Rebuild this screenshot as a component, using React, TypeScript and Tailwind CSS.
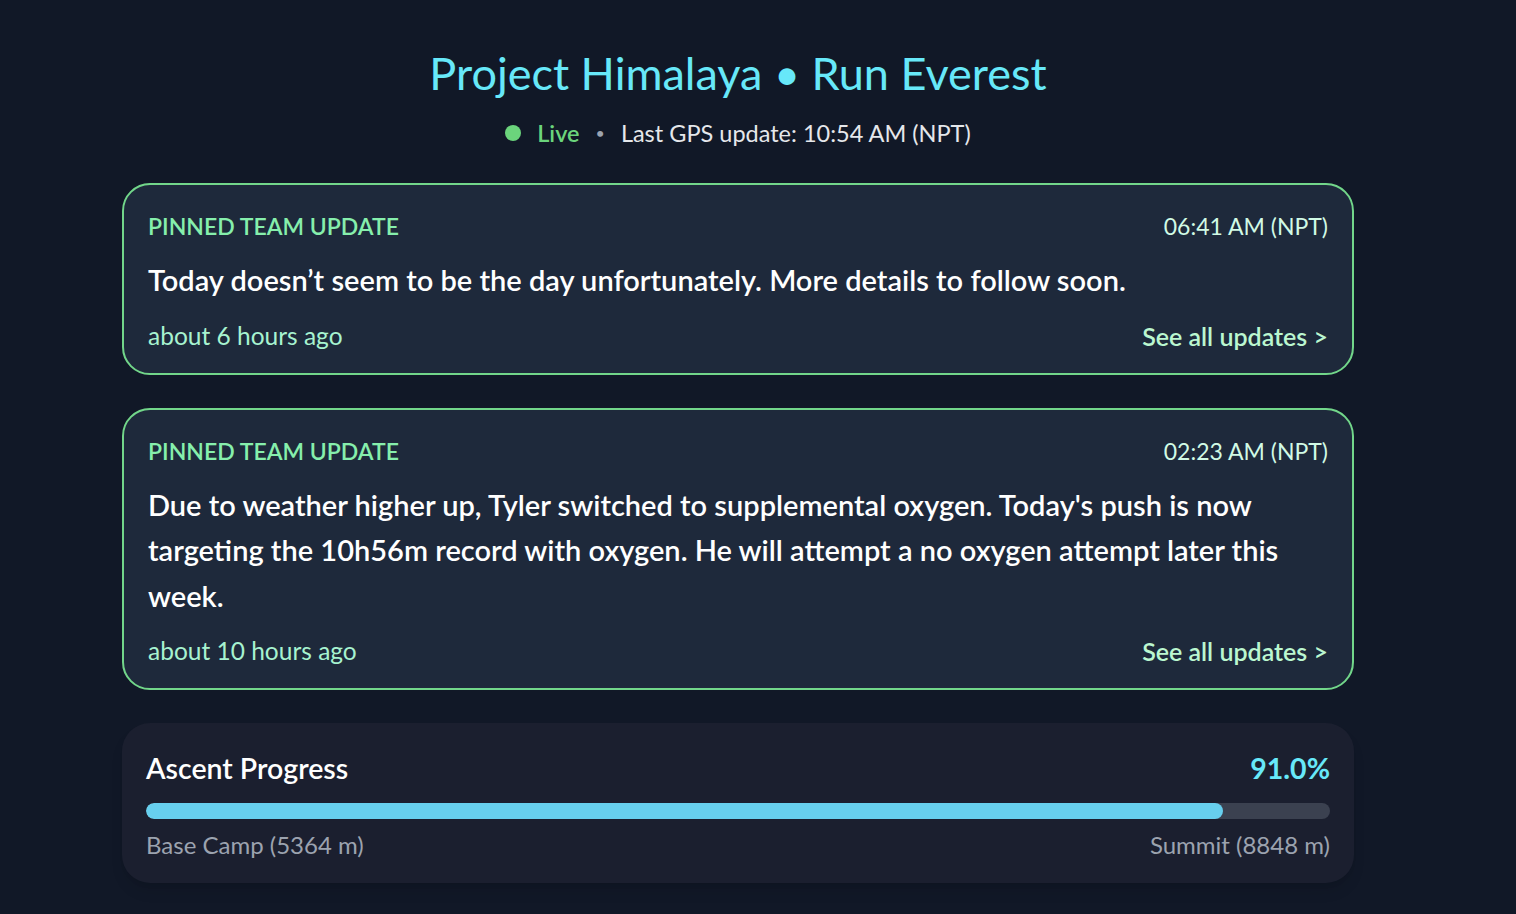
const updates = [
  {
    time: "06:41 AM (NPT)",
    text: "Today doesn’t seem to be the day unfortunately. More details to follow soon.",
    ago: "about 6 hours ago",
  },
  {
    time: "02:23 AM (NPT)",
    text: "Due to weather higher up, Tyler switched to supplemental oxygen. Today's push is now targeting the 10h56m record with oxygen. He will attempt a no oxygen attempt later this week.",
    ago: "about 10 hours ago",
  },
];

const UpdateCard = ({ time, text, ago }: { time: string; text: string; ago: string }) => {
  return (
    <div className="rounded-[28px] border-2 border-[#72d68a] bg-[#1e293b] px-6 pt-[23px] pb-[19px]">
      <div className="flex items-center justify-between leading-[36px]">
        <span className="text-[23px] font-semibold text-[#86efac]">PINNED TEAM UPDATE</span>
        <span className="text-[23px] text-[#d1fae5]">{time}</span>
      </div>
      <p className="mt-[13px] pr-[40px] text-[29px] font-semibold leading-[45.5px] text-white">{text}</p>
      <div className="mt-[15px] flex items-center justify-between leading-[36px]">
        <span className="text-[24.5px] text-[#a7f3d0]">{ago}</span>
        <a className="text-[25px] font-semibold text-[#bbf7d0]">See all updates &gt;</a>
      </div>
    </div>
  );
};

export default function App() {
  const pct = 91.0;
  return (
    <div className="min-h-screen bg-[#111827] font-['Lato','Open_Sans',sans-serif]">
      <div className="ml-[98px] w-[1280px] px-6 pt-[40px] pb-10">
        <header className="flex flex-col items-center">
          <h1 className="text-[45px] leading-[66px] text-[#67e8f9]">Project Himalaya • Run Everest</h1>
          <div className="mt-[9px] flex items-center text-[23.5px] leading-[36px]">
            <span className="mr-4 h-4 w-4 rounded-full bg-[#6bd47c]" />
            <span className="font-semibold text-[#6bd47c]">Live</span>
            <span className="mx-4 text-[16px] text-[#9ca3af]">•</span>
            <span className="text-[#e5e7eb]">Last GPS update: 10:54 AM (NPT)</span>
          </div>
        </header>

        <div className="mt-[32px] flex flex-col gap-[33px]">
          {updates.map((u) => (
            <UpdateCard key={u.time} {...u} />
          ))}

          <div className="rounded-[28px] bg-[#1b1f2f] px-6 pt-[26px] pb-[20px] shadow-lg">
            <div className="flex items-center justify-between">
              <span className="text-[28.5px] font-semibold leading-[38px] text-white">Ascent Progress</span>
              <span className="text-[28.5px] font-bold leading-[38px] text-[#67e8f9]">{pct.toFixed(1)}%</span>
            </div>
            <div className="mt-[16px] h-4 w-full overflow-hidden rounded-full bg-[#3b4150]">
              <div className="h-full rounded-full bg-[#67cfee]" style={{ width: `${pct}%` }} />
            </div>
            <div className="mt-[8px] flex items-center justify-between text-[24px] leading-[36px] text-[#9ca3af]">
              <span>Base Camp (5364 m)</span>
              <span>Summit (8848 m)</span>
            </div>
          </div>
        </div>
      </div>
    </div>
  );
}
